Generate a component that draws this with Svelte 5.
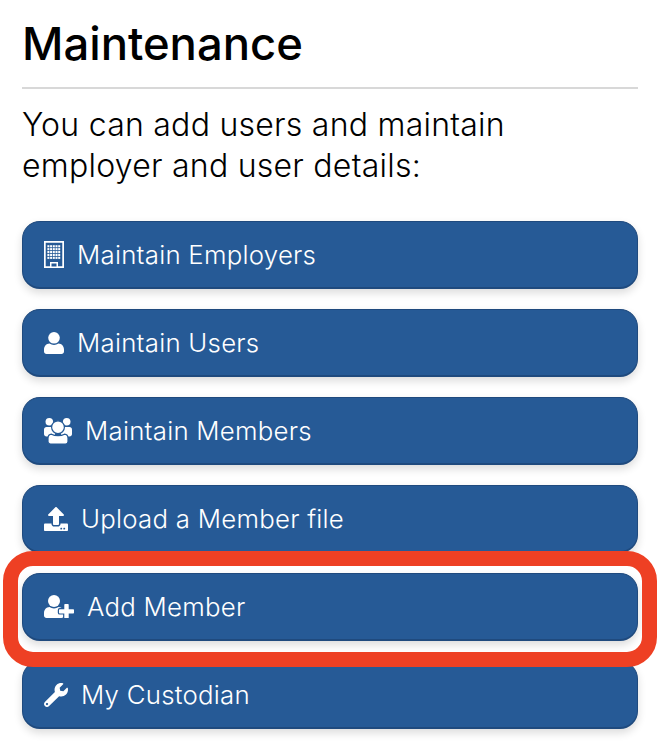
<script>
  const buttons = [
    { label: "Maintain Employers", icon: "building" },
    { label: "Maintain Users", icon: "user" },
    { label: "Maintain Members", icon: "users" },
    { label: "Upload a Member file", icon: "upload" },
    { label: "Add Member", icon: "user-plus" },
    { label: "My Custodian", icon: "wrench" }
  ];

  const windows = [];
  for (let row = 0; row < 5; row++) {
    for (let col = 0; col < 5; col++) {
      windows.push({ x: 3.4 + col * 2.7, y: 4.2 + row * 2.9 });
    }
  }
</script>

<main class="page">
  <h1>Maintenance</h1>
  <p>You can add users and maintain<br>employer and user details:</p>

  <div class="list">
    {#each buttons as button}
      <button class="item">
        {#if button.icon === "building"}
          <svg class="icon" width="20" height="27" viewBox="0 0 20 27" fill="#fff">
            <path fill-rule="evenodd" d="M0 0h20v27H0zM1.700 1.700v23.600h4.300v-4.300h8v4.300h4.300V1.700z"/>
            {#each windows as w}
              <rect x={w.x} y={w.y} width="2" height="2.100"/>
            {/each}
            <rect x="7.500" y="22.500" width="5" height="3" fill="#265a96"/>
          </svg>
        {:else if button.icon === "user"}
          <svg class="icon" width="20" height="22" viewBox="0 0 20 22" fill="#fff">
            <circle cx="10" cy="5.800" r="5.800"/>
            <path d="M5.500 11.500c1.300.9 2.900 1.400 4.500 1.400s3.200-.5 4.500-1.400c3.200.1 5.500 2.700 5.500 5.900v2.100c0 1.400-1.100 2.500-2.500 2.500h-15C1.100 22 0 20.900 0 19.500v-2.100c0-3.200 2.300-5.800 5.500-5.900z"/>
          </svg>
        {:else if button.icon === "users"}
          <svg class="icon" width="28" height="26" viewBox="0 0 28 26" fill="#fff">
            <circle cx="5.300" cy="3.800" r="3.800"/>
            <circle cx="22.700" cy="3.800" r="3.800"/>
            <path d="M2.500 9h5.600c1.500 0 2.900 1.200 2.900 2.800v4.200c0 1.300-1 2.400-2.300 2.400H2.500C1.100 18.400 0 17.300 0 15.900v-4.400C0 10.100 1.100 9 2.500 9z"/>
            <path d="M19.900 9h5.600c1.400 0 2.500 1.100 2.500 2.500v4.400c0 1.400-1.100 2.500-2.500 2.500h-6.200c-1.300 0-2.300-1.100-2.300-2.400v-4.200c0-1.600 1.400-2.800 2.900-2.800z"/>
            <circle cx="14" cy="9.200" r="6.400" stroke="#265a96" stroke-width="1.200"/>
            <path d="M7.500 16.200c1.700 1 4.300 1.500 6.500 1.500s4.800-.5 6.500-1.500c2 .2 3.500 1.900 3.500 4v3.300c0 1.400-1.100 2.500-2.500 2.500h-15A2.500 2.500 0 0 1 4 23.500v-3.300c0-2.100 1.500-3.800 3.500-4z" stroke="#265a96" stroke-width="1.200"/>
          </svg>
        {:else if button.icon === "upload"}
          <svg class="icon" width="24" height="24" viewBox="0 0 512 512" fill="#fff"><path d="M296 384h-80c-13.300 0-24-10.700-24-24V192h-87.700c-17.800 0-26.700-21.500-14.100-34.100L242.300 5.700c7.500-7.500 19.800-7.500 27.300 0l152.200 152.200c12.600 12.600 3.700 34.100-14.100 34.100H320v168c0 13.300-10.700 24-24 24zm216-8v112c0 13.300-10.700 24-24 24H24c-13.300 0-24-10.700-24-24V376c0-13.300 10.700-24 24-24h136v8c0 30.900 25.100 56 56 56h80c30.900 0 56-25.100 56-56v-8h136c13.300 0 24 10.700 24 24zm-124 88c0-11-9-20-20-20s-20 9-20 20 9 20 20 20 20-9 20-20zm64 0c0-11-9-20-20-20s-20 9-20 20 9 20 20 20 20-9 20-20z"/></svg>
        {:else if button.icon === "user-plus"}
          <svg class="icon" width="30" height="23" viewBox="0 0 30 23" fill="#fff">
            <circle cx="10" cy="6" r="6"/>
            <path d="M5.500 12c1.300.9 2.900 1.400 4.500 1.400s3.200-.5 4.500-1.400c3.200.1 5.500 2.700 5.500 5.900v2.600c0 1.400-1.100 2.500-2.500 2.500h-15C1.100 23 0 21.900 0 20.500v-2.600c0-3.200 2.300-5.800 5.500-5.900z"/>
            <path stroke="#265a96" stroke-width="2.400" paint-order="stroke" d="M21 9h3c.4 0 .7.300.7.700v4.600h4.600c.4 0 .7.300.7.700v2.700c0 .4-.3.700-.7.700h-4.600v4.600c0 .4-.3.700-.7.700h-3c-.4 0-.7-.3-.7-.7v-4.600h-4.600c-.4 0-.7-.3-.7-.7V15c0-.4.300-.7.700-.7h4.600V9.700c0-.4.300-.7.700-.7z"/>
          </svg>
        {:else}
          <svg class="icon" width="24" height="24" viewBox="0 0 512 512" fill="#fff"><path d="M507.730 109.100c-2.240-9.030-13.540-12.090-20.120-5.510l-74.360 74.360-67.880-11.310-11.310-67.880 74.360-74.360c6.620-6.620 3.430-17.900-5.660-20.160-47.380-11.740-99.550.91-136.580 37.930-39.640 39.640-50.550 97.100-34.050 147.200L18.740 402.760c-24.990 24.990-24.990 65.510 0 90.500 24.990 24.990 65.510 24.990 90.500 0l213.210-213.210c50.120 16.710 107.470 5.680 147.370-34.220 37.070-37.070 49.700-89.320 37.910-136.730zM64 472c-13.250 0-24-10.750-24-24 0-13.260 10.750-24 24-24s24 10.740 24 24c0 13.250-10.750 24-24 24z"/></svg>
        {/if}
        <span>{button.label}</span>
      </button>
    {/each}
    <div class="ring"></div>
  </div>
</main>

<style>
  :global(body) {
    margin: 0;
    background: #fff;
  }
  .page {
    width: 666px;
    height: 756px;
    box-sizing: border-box;
    padding: 14px 28px 0 22px;
    overflow: hidden;
    font-family: Inter, "Liberation Sans", sans-serif;
    color: #000;
  }
  h1 {
    margin: 0;
    font-size: 45.400px;
    font-weight: 500;
    line-height: 60px;
    padding-bottom: 13px;
    border-bottom: 2px solid #d8d8d8;
  }
  p {
    margin: 0;
    padding-top: 15px;
    font-size: 32px;
    font-weight: 350;
    letter-spacing: 0.250px;
    line-height: 41px;
  }
  .list {
    position: relative;
    display: flex;
    flex-direction: column;
    gap: 20px;
    margin-top: 35px;
  }
  .item {
    display: flex;
    align-items: center;
    gap: 13px;
    height: 68px;
    padding: 0 21px;
    box-sizing: border-box;
    background: #265a96;
    border: 1px solid #1f4a7e;
    border-bottom-width: 2px;
    border-radius: 18px;
    box-shadow: 0 4px 8px rgba(0, 0, 0, 0.14);
    color: #fff;
    font: inherit;
    font-size: 25.800px;
    font-weight: 350;
    letter-spacing: 0.250px;
    text-align: left;
  }
  .icon {
    flex: none;
  }
  .ring {
    position: absolute;
    left: -19px;
    right: -19px;
    top: 330px;
    height: 116px;
    box-sizing: border-box;
    border: 15px solid #ee4024;
    border-radius: 30px;
  }
</style>
